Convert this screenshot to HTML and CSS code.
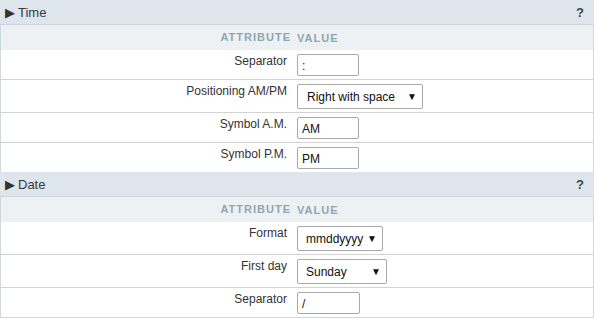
FILE: index.html
```html
<!DOCTYPE html>
<html>
<head>
<meta charset="utf-8">
<link rel="stylesheet" href="styles.css">
</head>
<body>
<div class="panel">
  <div class="sec-head"><span class="tri">&#9654;</span><span class="sec-title">Time</span><span class="help">?</span></div>
  <div class="sec-body">
    <div class="row attr"><div class="lab">ATTRIBUTE</div><div class="val">VALUE</div></div>
    <div class="row"><div class="lab">Separator</div><div class="val"><div class="inp w62">:</div></div></div>
    <div class="row"><div class="lab">Positioning AM/PM</div><div class="val"><div class="sel w126"><span>Right with space</span><span class="arr">&#9660;</span></div></div></div>
    <div class="row"><div class="lab">Symbol A.M.</div><div class="val"><div class="inp w62">AM</div></div></div>
    <div class="row last"><div class="lab">Symbol P.M.</div><div class="val"><div class="inp w62">PM</div></div></div>
  </div>
  <div class="sec-head"><span class="tri">&#9654;</span><span class="sec-title">Date</span><span class="help">?</span></div>
  <div class="sec-body">
    <div class="row attr"><div class="lab">ATTRIBUTE</div><div class="val">VALUE</div></div>
    <div class="row"><div class="lab">Format</div><div class="val"><div class="sel w86"><span>mmddyyyy</span><span class="arr">&#9660;</span></div></div></div>
    <div class="row"><div class="lab">First day</div><div class="val"><div class="sel w90"><span>Sunday</span><span class="arr">&#9660;</span></div></div></div>
    <div class="row"><div class="lab">Separator</div><div class="val"><div class="inp w63">/</div></div></div>
  </div>
</div>
</body>
</html>
```

FILE: styles.css
```css
html, body {
  margin: 0;
  padding: 0;
  background: #ffffff;
}
body {
  font-family: Arial, "Liberation Sans", sans-serif;
  font-size: 12px;
  color: #333333;
}
.panel {
  width: 594px;
}
.sec-head {
  display: flex;
  align-items: center;
  height: 25px;
  box-sizing: border-box;
  background: #dfe5ec;
  border-bottom: 1px solid #cdd6df;
  padding: 0 9px 0 5px;
  font-size: 13px;
  color: #333a44;
}
.tri {
  font-size: 13px;
  color: #333;
  margin-right: 3px;
  line-height: 1;
}
.sec-title {
  flex: 1;
  line-height: 1;
}
.help {
  font-weight: bold;
  font-size: 13px;
  color: #3d4550;
  margin-right: 1px;
}
.sec-body {
  border-left: 1px solid #cdd9e1;
  border-right: 1px solid #cdd9e1;
}
.row {
  display: grid;
  grid-template-columns: 291px 1fr;
  border-bottom: 1px solid #d3d3d3;
}
.row.last {
  border-bottom: none;
}
.row .lab {
  text-align: right;
  padding: 4px 5px 0 0;
  line-height: 15px;
}
.row .val {
  padding: 4px 5px 3px 5px;
}
.row.attr {
  background: #edf1f4;
  height: 25px;
  box-sizing: border-box;
  border-bottom: none;
  align-items: center;
  font-size: 11px;
  font-weight: bold;
  letter-spacing: 1px;
  color: #8fa6b4;
}
.row.attr .lab {
  padding: 0 1px 0 0;
}
.row.attr .val {
  padding: 0 0 0 5px;
}
.inp {
  height: 22px;
  box-sizing: border-box;
  border: 1px solid #a9a9a9;
  border-radius: 2px;
  padding: 4px 0 0 4px;
  font-size: 12px;
  color: #111;
  line-height: 14px;
}
.w62 { width: 62px; }
.w63 { width: 63px; }
.sel {
  height: 25px;
  box-sizing: border-box;
  border: 1px solid #a9a9a9;
  border-radius: 2px;
  display: flex;
  align-items: center;
  justify-content: space-between;
  padding: 0 5px 0 9px;
  font-size: 12px;
  color: #111;
  background: #fff;
}
.arr {
  font-size: 10px;
  color: #111;
}
.w126 { width: 126px; }
.w86 { width: 86px; padding-left: 8px; }
.w90 { width: 90px; padding-left: 8px; }
```
